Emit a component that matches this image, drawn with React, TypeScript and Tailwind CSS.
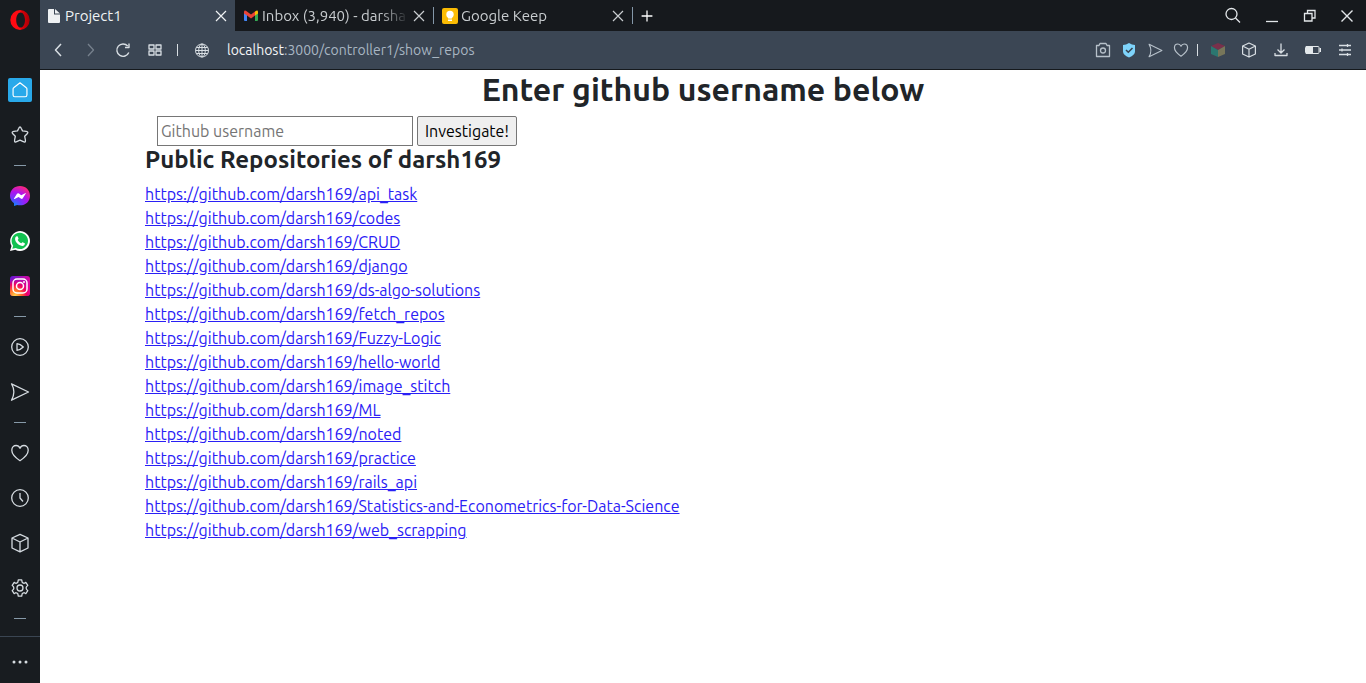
import React from 'react';

const repos = [
  'api_task', 'codes', 'CRUD', 'django', 'ds-algo-solutions', 'fetch_repos', 'Fuzzy-Logic', 'hello-world',
  'image_stitch', 'ML', 'noted', 'practice', 'rails_api', 'Statistics-and-Econometrics-for-Data-Science', 'web_scrapping',
];

type IconProps = { size?: number; className?: string; width?: number; children: React.ReactNode };

function Icon({ size = 20, className = '', width = 1.3, children }: IconProps) {
  return (
    <svg width={size} height={size} viewBox="0 0 20 20" fill="none" stroke="currentColor" strokeWidth={width}
      strokeLinejoin="round" className={`shrink-0 ${className}`} aria-hidden="true">
      {children}
    </svg>
  );
}

const heart = <path d="M10 17.700C7.500 16 1.800 11.700 1.800 7.200 1.800 4.300 3.800 2.500 6.100 2.500 8 2.500 9.300 3.700 10 5.300 10.700 3.700 12 2.500 13.900 2.500 16.200 2.500 18.200 4.300 18.200 7.200 18.200 11.700 12.500 16 10 17.700Z" />;
const plane = <path d="M1.500 1.800 18.500 10 1.500 18.200C4.600 12.800 4.600 7.200 1.500 1.800Z" />;
const cube = <path d="M10 1.300 18 5v10l-8 3.800L2 15V5l8-3.700ZM2 5l8 4 8-4M10 9v9.800" />;
const cross = <path d="m5 5 10 10M15 5 5 15" />;

function SideButton({ label, children }: { label: string; children: React.ReactNode }) {
  return (
    <button type="button" aria-label={label} className="flex h-[45px] w-full shrink-0 items-center justify-center text-[#d5dbe0]">
      {children}
    </button>
  );
}

function Dash() {
  return <div className="flex h-4 shrink-0 items-center justify-center"><span className="h-px w-3 bg-[#8699a8]" /></div>;
}

function ToolButton({ label, className = '', children }: { label: string; className?: string; children: React.ReactNode }) {
  return <button type="button" aria-label={label} className={`flex h-6 shrink-0 items-center justify-center ${className}`}>{children}</button>;
}

function Sidebar() {
  return (
    <aside className="flex w-10 shrink-0 flex-col bg-[#181c20]">
      <div className="flex h-[67px] shrink-0 justify-center pt-2.5">
        <svg width="20" height="20" viewBox="0 0 20 20" aria-label="Opera" role="img">
          <defs>
            <linearGradient id="opera" x1="0" y1="0" x2="1" y2="0">
              <stop offset="0.5" stopColor="#ff0a12" /><stop offset="0.62" stopColor="#d80008" /><stop offset="1" stopColor="#a80006" />
            </linearGradient>
          </defs>
          <path fillRule="evenodd" fill="url(#opera)" d="M10 0a9.700 10 0 1 0 0 20 9.700 10 0 1 0 0-20Zm.6 2.400c2.500 0 4.400 3.400 4.400 7.600s-1.900 7.600-4.400 7.600S6.200 14.200 6.200 10s1.900-7.600 4.400-7.600Z" />
        </svg>
      </div>
      <SideButton label="Home">
        <span className="flex size-6 items-center justify-center rounded-xs bg-[#29a9ea] text-white">
          <Icon size={18}><path d="M10 2 3 7.500Q2.300 8 2.300 9v6.500q0 2 2 2h11.400q2 0 2-2V9q0-1-.7-1.500Z" /></Icon>
        </span>
      </SideButton>
      <SideButton label="Bookmarks">
        <Icon><path d="M10 2q.7 0 1.200 1.200l1.300 2.700 3.700.5q2.700.5 1 2.300l-2.500 2.600.7 3.700q.4 2.900-2.100 1.700L10 15.200l-3.300 1.500q-2.500 1.200-2.100-1.700l.7-3.700L2.800 8.700q-1.700-1.800 1-2.300l3.700-.5 1.300-2.700Q9.300 2 10 2Z" /></Icon>
      </SideButton>
      <Dash />
      <SideButton label="Messenger">
        <svg width="20" height="20" viewBox="0 0 20 20" aria-hidden="true">
          <defs>
            <radialGradient id="messenger" cx="0.2" cy="1" r="1.100">
              <stop offset="0" stopColor="#078cff" /><stop offset="0.35" stopColor="#7136ff" /><stop offset="0.65" stopColor="#b013ec" /><stop offset="1" stopColor="#ff2975" />
            </radialGradient>
          </defs>
          <path fill="url(#messenger)" d="M10 0c5.700 0 10 4.100 10 9.700s-4.300 9.600-10 9.600c-1 0-2-.1-2.900-.4L4 20v-2.800C1.500 15.500 0 13 0 9.700 0 4.100 4.300 0 10 0Z" />
          <path fill="#fff" d="m4 12.500 3-4.700q.8-1.100 2-.3l2.200 1.700 4-2q.9-.4.6.4l-3 4.700q-.8 1.100-2 .3l-2.200-1.700-4 2q-.8.3-.6-.4Z" />
        </svg>
      </SideButton>
      <SideButton label="WhatsApp">
        <svg width="20" height="20" viewBox="0 0 20 20" aria-hidden="true">
          <path fill="#fff" d="M0 20 1.500 15A9.900 9.900 0 1 1 5.300 18.700Z" />
          <path fill="#12c150" d="m2.300 17.700.9-3A8.200 8.200 0 1 1 5.800 17Z" />
          <path fill="#fff" d="M6.900 5.300c.5 0 .7.100.9.500l.7 1.700c.1.400-.4 1-.8 1.500.9 1.600 2 2.700 3.700 3.300.6-.7.900-1.200 1.300-1l1.900.9c.4.200.4.500.3.900-.4 1.500-1.600 1.900-2.800 1.800C8.200 14.200 5 10.800 5.100 7.900c.1-1.400.8-2.500 1.800-2.600Z" />
        </svg>
      </SideButton>
      <SideButton label="Instagram">
        <svg width="20" height="20" viewBox="0 0 20 20" aria-hidden="true">
          <defs>
            <linearGradient id="insta-base" x1="0" y1="0" x2="1" y2="0.3"><stop offset="0" stopColor="#6218d8" /><stop offset="1" stopColor="#df0798" /></linearGradient>
            <radialGradient id="insta-glow" cx="0.25" cy="1" r="0.9"><stop offset="0" stopColor="#ffd84a" /><stop offset="0.35" stopColor="#ff6a28" /><stop offset="0.65" stopColor="#f00062" /><stop offset="1" stopColor="#e0009a" stopOpacity="0" /></radialGradient>
          </defs>
          <rect width="20" height="20" rx="3" fill="url(#insta-base)" />
          <rect width="20" height="20" rx="3" fill="url(#insta-glow)" />
          <g fill="none" stroke="#fff" strokeWidth="1.500"><rect x="3" y="3" width="14" height="14" rx="4" /><circle cx="10" cy="10" r="3.500" /></g>
          <circle cx="14" cy="6" r="1" fill="#fff" />
        </svg>
      </SideButton>
      <Dash />
      <SideButton label="Player"><Icon><circle cx="10" cy="10" r="8.300" /><path d="M7 6.700q3.300.4 6.300 3.300-3 2.900-6.300 3.300Z" /></Icon></SideButton>
      <SideButton label="My Flow"><Icon>{plane}</Icon></SideButton>
      <Dash />
      <SideButton label="Pinboards"><Icon>{heart}</Icon></SideButton>
      <SideButton label="History"><Icon><circle cx="10" cy="10" r="8.300" /><path d="M10 5v5l3 3.500" /></Icon></SideButton>
      <SideButton label="Extensions"><Icon>{cube}</Icon></SideButton>
      <SideButton label="Settings">
        <Icon>
          <circle cx="10" cy="10" r="3" />
          <path d="M8.300 1.800h3.400l.4 2.100q.1.700.8.900l.7.300q.6.300 1.200-.1l1-.6 2 3-1.200 1.200q-.5.500-.4 1.400t.4 1.400l1.200 1.200-2 3-1-.6q-.6-.4-1.200-.1l-.7.300q-.7.200-.8.900l-.4 2.100H8.300l-.4-2.100q-.1-.7-.8-.9l-.7-.3q-.6-.3-1.200.1l-1 .6-2-3 1.200-1.200q.5-.5.4-1.400t-.4-1.400L2.200 7.400l2-3 1 .6q.6.400 1.200.1l.7-.3q.7-.2.8-.9Z" />
        </Icon>
      </SideButton>
      <Dash />
      <div className="mt-auto flex h-[47px] shrink-0 border-t border-[#3a4552] pt-0.5">
        <SideButton label="More">
          <svg width="16" height="4" viewBox="0 0 16 4" fill="currentColor" aria-hidden="true"><circle cx="2" cy="2" r="1.500" /><circle cx="8" cy="2" r="1.500" /><circle cx="14" cy="2" r="1.500" /></svg>
        </SideButton>
      </div>
    </aside>
  );
}

function Tab({ title, icon, active = false }: { title: string; icon: React.ReactNode; active?: boolean }) {
  return (
    <div className={`flex shrink items-center pr-1 ${active ? 'w-[195px] bg-[#3b4654] pl-1 text-[#f0f3f5]' : 'w-[198px] pl-1.5 text-[#c9cdd0]'}`}>
      <span className="flex w-5 shrink-0 items-center justify-center">{icon}</span>
      <span className={`min-w-0 flex-1 overflow-hidden pt-px pl-px whitespace-nowrap ${active ? '' : 'mask-r-from-80%'}`}>{title}</span>
      <button type="button" aria-label={`Close ${title}`} className="flex w-5 shrink-0"><Icon width={1.200}>{cross}</Icon></button>
    </div>
  );
}

function TabBar() {
  return (
    <div className="flex h-[31px] shrink-0 items-stretch bg-[#16191d] text-[15px]">
      <Tab active title="Project1" icon={<svg width="14" height="14" viewBox="0 0 14 14" aria-hidden="true"><path fill="#eef1f3" d="M2 0h5v5.500h6V13q0 1-1 1H2q-1 0-1-1V1q0-1 1-1Zm6 0 5 4.500H8Z" /></svg>} />
      <Tab title="Inbox (3,940) - darsha" icon={
        <svg width="14" height="12" viewBox="0 0 14 12" aria-hidden="true">
          <path fill="#4285f4" d="M0 2v8q0 1 1 1h2V4Z" /><path fill="#34a853" d="M14 2v8q0 1-1 1h-2V4Z" />
          <path fill="#ea4335" d="M0 3.500V2Q.3-.3 2.300 1L7 4.500 11 1.500v4L7 8.500 3 5.500Z" /><path fill="#fbbc04" d="M11 1.500Q14-.7 14 2v1.500l-3 2Z" />
        </svg>} />
      <span className="my-[7px] w-px shrink-0 bg-[#8497a8]" />
      <Tab title="Google Keep" icon={
        <svg width="16" height="16" viewBox="0 0 16 16" aria-hidden="true"><rect width="16" height="16" rx="2" fill="#fbbc04" /><circle cx="8" cy="6.500" r="3.700" fill="#fff" /><path fill="#fff" d="M6 8h4v2.500H6Zm0 3.500h4V13H6Z" /></svg>} />
      <span className="my-[7px] w-px shrink-0 bg-[#8497a8]" />
      <button type="button" aria-label="New tab" className="flex w-7 items-center justify-center text-white"><Icon size={18} width={1.400}><path d="M10 4v12M4 10h12" /></Icon></button>
      <div className="ml-auto flex items-center gap-[18px] pr-[9px] text-[#e3e7ea]">
        <button type="button" aria-label="Search"><Icon><circle cx="8.500" cy="8" r="5.500" /><path d="m12.500 12 4.500 4.500" /></Icon></button>
        <button type="button" aria-label="Minimize"><Icon><path d="M5 15.500h12" /></Icon></button>
        <button type="button" aria-label="Restore"><Icon><path d="M5.500 7.500h7.500v7.500h-7.500ZM8.500 7.500v-3h7.500v7.500h-3" strokeLinejoin="miter" /></Icon></button>
        <button type="button" aria-label="Close window"><Icon width={1.400}><path d="m4.500 4.500 11 11m0-11-11 11" /></Icon></button>
      </div>
    </div>
  );
}

function AddressBar() {
  return (
    <div className="flex h-[39px] shrink-0 items-center border-b border-[#15191d] bg-[#3b4654] text-sm text-[#d8dee3]">
      <ToolButton label="Back" className="ml-[3px] w-8"><Icon width={1.500}><path d="m12 4-5.500 6 5.500 6" /></Icon></ToolButton>
      <ToolButton label="Forward" className="w-8 text-[#76818d]"><Icon width={1.300}><path d="m7 4 5.500 6L7 16" /></Icon></ToolButton>
      <ToolButton label="Reload" className="w-8"><Icon width={1.400}><path d="M15.800 12.500A6.200 6.200 0 1 1 14.700 6M16 3.500v4h-4" /></Icon></ToolButton>
      <ToolButton label="Speed dial" className="w-8"><Icon><path d="M4 5h5v4H4Zm7 0h5v4h-5ZM4 11h5v4H4Zm7 0h5v4h-5Z" /></Icon></ToolButton>
      <span className="ml-1.5 h-3 w-px bg-[#d8dee3]" />
      <ToolButton label="Site information" className="ml-2 w-8">
        <Icon width={1}><circle cx="10" cy="10.500" r="6.500" /><ellipse cx="10" cy="10.500" rx="3.300" ry="6.500" /><path d="M10 4v13M3.500 10.500h13M4.500 7.500h11M4.500 13.500h11" /></Icon>
      </ToolButton>
      <div className="ml-[9px] min-w-0 flex-1 whitespace-nowrap text-[#a9b6c3]"><span className="text-[#f3f5f7]">localhost</span>:3000/controller1/show_repos</div>
      <div className="flex items-center pr-[5px]">
        <ToolButton label="Snapshot" className="w-[26px] text-[#b7c1ca]"><Icon><path d="M3.500 5.500H6L7 3.500h6l1 2h2.500v11h-13Z" /><circle cx="10" cy="10.500" r="2.500" /></Icon></ToolButton>
        <ToolButton label="Blocker" className="w-[26px]">
          <svg width="14" height="16" viewBox="0 0 14 16" aria-hidden="true"><path fill="#7ed3fa" d="M7 1q3 2 6 2v6.500q0 3.500-6 6-6-2.500-6-6V3q3 0 6-2Z" /><path d="m4 8 2.300 2.300L10.500 6" fill="none" stroke="#354250" strokeWidth="1.500" /></svg>
        </ToolButton>
        <ToolButton label="Send to Flow" className="w-[26px] text-[#b7c1ca]"><Icon size={15} width={1.500}>{plane}</Icon></ToolButton>
        <ToolButton label="Add to pinboard" className="w-[26px] text-[#b7c1ca]"><Icon size={16} width={1.500}>{heart}</Icon></ToolButton>
        <span className="mx-[3px] h-3 w-px bg-[#d8dee3]" />
        <ToolButton label="Cube extension" className="ml-[2px] w-[30px]">
          <svg width="14" height="16" viewBox="0 0 14 16" aria-hidden="true"><path fill="#79304b" d="m7 1 7 3-7 4-7-4Z" /><path fill="#2b7770" d="m0 4 7 4v7l-7-3Z" /><path fill="#77765a" d="m14 4-7 4v7l7-3Z" /></svg>
        </ToolButton>
        <ToolButton label="Extensions menu" className="w-8"><Icon size={16} width={1.500}>{cube}</Icon></ToolButton>
        <ToolButton label="Downloads" className="w-8"><Icon><path d="M10 3.500V13M6.500 9.500 10 13l3.500-3.500M4 13v2.500h12V13" /></Icon></ToolButton>
        <ToolButton label="Battery saver" className="w-8">
          <svg width="16" height="8" viewBox="0 0 16 8" aria-hidden="true"><rect x="0.500" y="0.500" width="13.500" height="7" rx="1" fill="none" stroke="#e3e8eb" /><path fill="#e3e8eb" d="M1 0h7v8H1ZM14.500 2H16v4h-1.500Z" /></svg>
        </ToolButton>
        <ToolButton label="Easy setup" className="w-8"><Icon><path d="M4 5.500h12M4 10h12M4 14.500h12M12.500 4v3M7 8.500v3M12.500 13v3" /></Icon></ToolButton>
      </div>
    </div>
  );
}

export default function App() {
  return (
    <div className="flex min-h-screen bg-white font-['Ubuntu','Noto_Sans','Open_Sans',sans-serif]">
      <Sidebar />
      <div className="flex min-w-0 flex-1 flex-col">
        <TabBar />
        <AddressBar />
        <main className="mx-auto w-full max-w-[1140px] px-3 text-base text-[#212529]">
          <h1 className="mb-2 text-center text-[32px] leading-[38px] font-semibold">Enter github username below</h1>
          <form className="flex gap-1 pl-3" onSubmit={(event) => event.preventDefault()}>
            <input type="text" aria-label="Github username" placeholder="Github username" className="h-[30px] w-64 border border-[#767676] bg-white px-[3px] placeholder:text-[#757575]" />
            <button type="submit" className="h-[30px] rounded-xs border border-[#767676] bg-[#efefef] px-[7px] text-black">Investigate!</button>
          </form>
          <h2 className="mb-2 text-2xl leading-7 font-semibold">Public Repositories of darsh169</h2>
          <ul>
            {repos.map((repo) => (
              <li key={repo}><a href={`https://github.com/darsh169/${repo}`} className="text-[#2a20f5] underline">{`https://github.com/darsh169/${repo}`}</a></li>
            ))}
          </ul>
        </main>
      </div>
    </div>
  );
}
